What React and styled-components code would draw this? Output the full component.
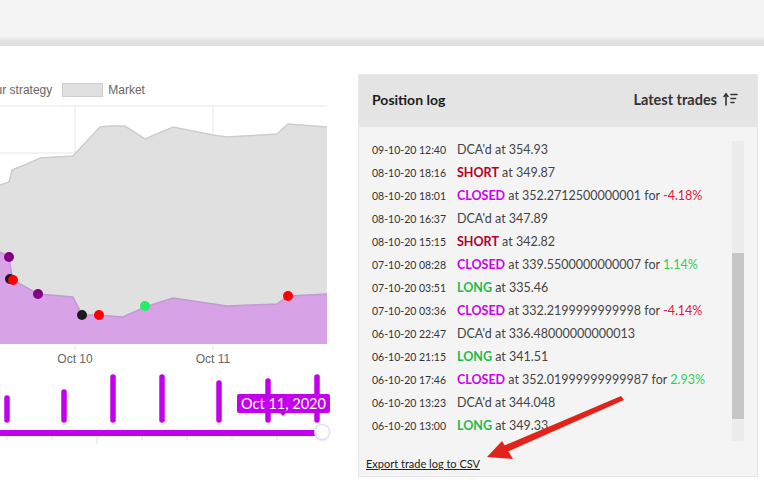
import React from 'react';
import styled, { createGlobalStyle } from 'styled-components';

const GlobalStyle = createGlobalStyle`
  body {
    margin: 0;
    background: #fff;
    overflow: hidden;
    font-family: Lato, "Open Sans", sans-serif;
  }
`;

// trade log, newest first
const trades = [
  { date: '09-10-20 12:40', kind: 'dca', price: '354.93' },
  { date: '08-10-20 18:16', kind: 'short', price: '349.87' },
  { date: '08-10-20 18:01', kind: 'closed', price: '352.2712500000001', pnl: '-4.18%' },
  { date: '08-10-20 16:37', kind: 'dca', price: '347.89' },
  { date: '08-10-20 15:15', kind: 'short', price: '342.82' },
  { date: '07-10-20 08:28', kind: 'closed', price: '339.5500000000007', pnl: '1.14%' },
  { date: '07-10-20 03:51', kind: 'long', price: '335.46' },
  { date: '07-10-20 03:36', kind: 'closed', price: '332.2199999999998', pnl: '-4.14%' },
  { date: '06-10-20 22:47', kind: 'dca', price: '336.48000000000013' },
  { date: '06-10-20 21:15', kind: 'long', price: '341.51' },
  { date: '06-10-20 17:46', kind: 'closed', price: '352.01999999999987', pnl: '2.93%' },
  { date: '06-10-20 13:23', kind: 'dca', price: '344.048' },
  { date: '06-10-20 13:00', kind: 'long', price: '349.33' },
];

const kindColors = { short: '#b1002c', closed: '#c905e8', long: '#1fba4c' };
const kindLabels = { short: 'SHORT', closed: 'CLOSED', long: 'LONG' };

const marketLine = [
  [0, 185], [9, 182], [12, 170], [17, 168], [27, 164], [40, 158], [73, 156],
  [100, 127], [110, 126], [125, 126], [145, 139], [173, 127], [213, 135],
  [227, 137], [277, 134], [288, 124], [327, 127],
];
const strategyLine = [
  [0, 252], [9, 257], [12, 277], [13, 280], [38, 294], [73, 297], [82, 315],
  [98, 315], [123, 317], [145, 307], [173, 298], [227, 306], [277, 304],
  [288, 296], [327, 294],
];
const dots = [
  [9, 257, '#850085'], [10, 279, '#1b1b1b'], [13, 280, '#ff0000'], [38, 294, '#850085'],
  [82, 315, '#1b1b1b'], [99, 315, '#ff0000'], [145, 306, '#22ee66'], [288, 296, '#ff0000'],
];
const bars = [
  [7, 395], [64, 389], [113, 374], [162, 374], [219, 380], [268, 378], [317, 374],
];
const ticks = [7, 52, 97, 142, 187, 232, 277];

const toPoints = (pts) => pts.map((p) => p.join(',')).join(' ');
const toArea = (pts, bottom) =>
  `M${pts[0][0]},${bottom} L${toPoints(pts)} L${pts[pts.length - 1][0]},${bottom} Z`;

function PriceChart() {
  return (
    <ChartSvg width="340" height="265" viewBox="0 100 340 265">
      <line x1="0" y1="106" x2="327" y2="106" stroke="#e6e6e6" />
      <line x1="0" y1="153" x2="327" y2="153" stroke="#e6e6e6" />
      <line x1="75" y1="106" x2="75" y2="350" stroke="#e6e6e6" />
      <line x1="213" y1="106" x2="213" y2="350" stroke="#e6e6e6" />
      <path d={toArea(marketLine, 344)} fill="#e0e0e0" />
      <polyline points={toPoints(marketLine)} fill="none" stroke="#cdcdcd" strokeWidth="1.5" />
      <path d={toArea(strategyLine, 344)} fill="#d7a2e6" />
      <polyline points={toPoints(strategyLine)} fill="none" stroke="#c49ad4" strokeWidth="1.5" />
      {dots.map(([x, y, c], i) => (
        <circle key={i} cx={x} cy={y} r="5" fill={c} />
      ))}
      <AxisLabel x="75" y="363">Oct 10</AxisLabel>
      <AxisLabel x="213" y="363">Oct 11</AxisLabel>
    </ChartSvg>
  );
}

function RangeSlider() {
  return (
    <SliderWrap>
      <svg width="340" height="85" viewBox="0 365 340 85">
        {bars.map(([x, top]) => (
          <line key={x} x1={x} y1={top + 3} x2={x} y2="420" stroke="#c300ec" strokeWidth="5.5" strokeLinecap="round" />
        ))}
        {ticks.map((x, i) => (
          <line key={x} x1={x} y1="436" x2={x} y2={i === 2 ? 444 : 440} stroke="#dddddd" />
        ))}
        <rect x="0" y="430" width="322" height="6" fill="#c300ec" />
      </svg>
      <Tooltip>Oct 11, 2020</Tooltip>
      <Thumb />
    </SliderWrap>
  );
}

function SortIcon() {
  return (
    <svg width="15" height="14" viewBox="0 0 15 14" fill="none" stroke="#333" strokeWidth="1.6" strokeLinecap="round">
      <path d="M3 13V2" />
      <path d="M1 4.5L3 2l2 2.5" />
      <path d="M8 2.5h6" />
      <path d="M8 6.5h4.5" />
      <path d="M8 10.5h3" />
    </svg>
  );
}

function TradeRow({ trade }) {
  return (
    <Row>
      <DateCell>{trade.date}</DateCell>
      <Entry>
        {trade.kind === 'dca' ? (
          <>DCA'd at {trade.price}</>
        ) : (
          <>
            <Kind color={kindColors[trade.kind]}>{kindLabels[trade.kind]}</Kind> at {trade.price}
            {trade.pnl && (
              <>
                {' for '}
                <Pnl negative={trade.pnl.startsWith('-')}>{trade.pnl}</Pnl>
              </>
            )}
          </>
        )}
      </Entry>
    </Row>
  );
}

export default function App() {
  return (
    <Page>
      <GlobalStyle />
      <TopBar />
      <Main>
        <ChartColumn>
          <Legend>
            <LegendItem>
              <Swatch fill="#d7a2e6" border="#c49ad4" />
              Your strategy
            </LegendItem>
            <LegendItem>
              <Swatch fill="#e0e0e0" border="#cdcdcd" />
              Market
            </LegendItem>
          </Legend>
          <PriceChart />
          <RangeSlider />
        </ChartColumn>
        <Panel>
          <PanelHeader>
            <Title>Position log</Title>
            <SortButton>
              Latest trades
              <SortIcon />
            </SortButton>
          </PanelHeader>
          <PanelBody>
            <ScrollArea>
              <List>
                {trades.map((t) => (
                  <TradeRow key={t.date} trade={t} />
                ))}
              </List>
              <ScrollTrack>
                <ScrollThumb />
              </ScrollTrack>
            </ScrollArea>
            <Footer>
              <ExportLink href="#">Export trade log to CSV</ExportLink>
            </Footer>
          </PanelBody>
        </Panel>
      </Main>
      <Annotation width="150" height="75" viewBox="480 390 150 75">
        <polygon points="621,396 624,400 507,452 503,446" fill="#e2231a" />
        <polygon points="487,457 502,441 513,459" fill="#e2231a" />
      </Annotation>
    </Page>
  );
}

const Page = styled.div`
  position: relative;
  width: 764px;
  height: 489px;
  overflow: hidden;
`;

const TopBar = styled.div`
  height: 46px;
  background: linear-gradient(#f4f4f4 0, #f4f4f4 36px, #dfdfdf 42px, #dfdfdf 46px);
`;

const Main = styled.div`
  display: flex;
  align-items: flex-start;
`;

const ChartColumn = styled.div`
  width: 340px;
  flex-shrink: 0;
  padding-top: 37px;
`;

const Legend = styled.div`
  display: flex;
  gap: 10px;
  margin-left: -64px;
  height: 13px;
  align-items: center;
  font-family: "Liberation Sans", Arial, sans-serif;
  font-size: 12px;
  color: #666;
`;

const LegendItem = styled.div`
  display: flex;
  align-items: center;
  gap: 5px;
  white-space: nowrap;
`;

const Swatch = styled.span`
  width: 39px;
  height: 12px;
  background: ${(p) => p.fill};
  border: 1px solid ${(p) => p.border};
`;

const ChartSvg = styled.svg`
  display: block;
  margin-top: 4px;
`;

const AxisLabel = styled.text`
  font-family: "Liberation Sans", Arial, sans-serif;
  font-size: 12px;
  fill: #666;
  text-anchor: middle;
`;

const SliderWrap = styled.div`
  position: relative;
  height: 85px;
  svg {
    display: block;
  }
`;

const Tooltip = styled.div`
  position: absolute;
  left: 237px;
  top: 29px;
  width: 93px;
  height: 19px;
  border-radius: 2px;
  background: #c300ec;
  color: #fff;
  font-family: Lato, sans-serif;
  font-size: 14.5px;
  line-height: 19px;
  text-align: center;
  &::after {
    content: '';
    position: absolute;
    left: 43px;
    bottom: -3px;
    border-left: 3px solid transparent;
    border-right: 3px solid transparent;
    border-top: 3px solid #c300ec;
  }
`;

const Thumb = styled.div`
  position: absolute;
  left: 315px;
  top: 60px;
  width: 14px;
  height: 14px;
  border-radius: 50%;
  background: #fff;
  box-shadow: 0 0 0 1px #e3d3f7, 0 1px 3px rgba(160, 120, 220, 0.45);
`;

const Panel = styled.div`
  width: 398px;
  margin: 28px 0 0 18px;
  border: 1px solid #e9e9e9;
  background: #f4f4f4;
  font-family: Lato, "Open Sans", sans-serif;
`;

const PanelHeader = styled.div`
  height: 52px;
  box-sizing: border-box;
  display: flex;
  align-items: center;
  justify-content: space-between;
  padding: 0 19px 4px 13px;
  background: #e4e4e4;
`;

const Title = styled.div`
  font-size: 14px;
  font-weight: 700;
  color: #1b1b1b;
`;

const SortButton = styled.div`
  display: flex;
  align-items: center;
  gap: 6px;
  font-size: 14.5px;
  font-weight: 700;
  color: #333;
`;

const PanelBody = styled.div`
  padding-top: 11px;
`;

const ScrollArea = styled.div`
  display: flex;
  height: 303px;
  padding-right: 13px;
`;

const List = styled.div`
  flex: 1;
  overflow: hidden;
  padding-left: 13px;
`;

const Row = styled.div`
  display: flex;
  align-items: center;
  height: 23px;
  white-space: nowrap;
`;

const DateCell = styled.span`
  width: 85px;
  flex-shrink: 0;
  font-size: 10.5px;
  color: #333;
`;

const Entry = styled.span`
  font-size: 12.5px;
  color: #444;
`;

const Kind = styled.b`
  font-weight: 700;
  color: ${(p) => p.color};
`;

const Pnl = styled.span`
  color: ${(p) => (p.negative ? '#d8193f' : '#2fcf5c')};
`;

const ScrollTrack = styled.div`
  width: 12px;
  margin-top: 3px;
  background: #ececec;
  display: flex;
  flex-direction: column;
  padding-top: 112px;
  padding-bottom: 22px;
`;

const ScrollThumb = styled.div`
  flex: 1;
  background: #c6c6c6;
`;

const Footer = styled.div`
  padding: 11px 7px 10px;
  height: 14px;
`;

const ExportLink = styled.a`
  font-size: 11px;
  line-height: 14px;
  color: #222;
  text-decoration: underline;
`;

const Annotation = styled.svg`
  position: absolute;
  left: 480px;
  top: 390px;
  pointer-events: none;
`;
